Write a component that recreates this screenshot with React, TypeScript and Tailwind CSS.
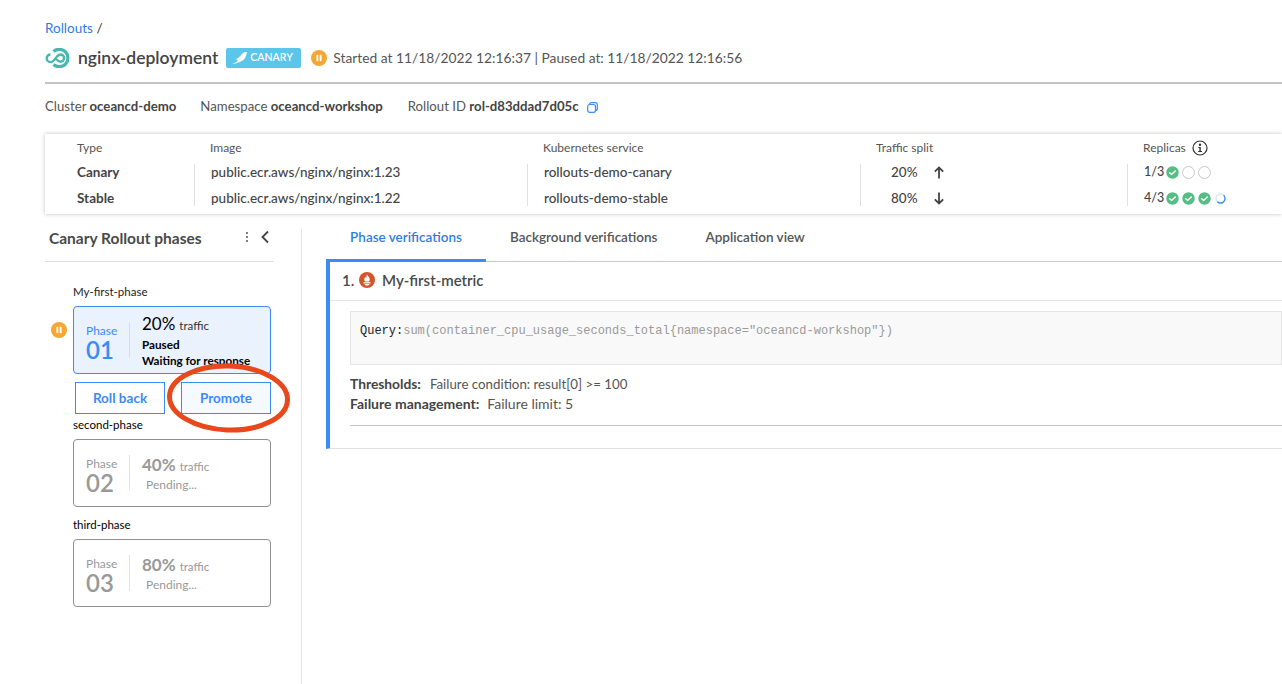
const PauseIcon = ({ size = 16 }: { size?: number }) => (
  <svg width={size} height={size} viewBox="0 0 16 16" className="shrink-0">
    <circle cx="8" cy="8" r="8" fill="#f5a733" />
    <rect x="5.4" y="4.8" width="1.9" height="6.4" rx="0.8" fill="#fff" />
    <rect x="8.7" y="4.8" width="1.9" height="6.4" rx="0.8" fill="#fff" />
  </svg>
)

const Logo = () => (
  <svg width="25" height="20" viewBox="0 0 25 20" className="shrink-0">
    <path d="M8.500 3.500A8.700 8.700 0 1 1 8.500 16.500" fill="none" stroke="#47b8b0" strokeWidth="3.200" />
    <path d="M5.500 6.500a3.800 3.800 0 1 0 0 7.600C8.500 14.100 10.500 10 12 8.500C13.500 7 14.500 6.500 15.500 6.500a3.600 3.600 0 0 1 0 7.200C14 13.700 12.500 12.500 11 11" fill="none" stroke="#47b8b0" strokeWidth="2.400" />
  </svg>
)

const Bird = () => (
  <svg width="18" height="14" viewBox="0 0 18 14">
    <path d="M1 13C4 12 6 11 7 9.500C6 9 5.500 8.500 5 8C8 7 10 4 11.500 2.500C13 1 15 0.500 16.500 1.500C15.800 2 15.500 2.500 15.400 3.500C15 7 11 11 7 11.500C5 12.500 3 13 1 13Z" fill="#fff" />
  </svg>
)

const Check = () => (
  <svg width="13" height="13" viewBox="0 0 13 13" className="shrink-0">
    <circle cx="6.500" cy="6.500" r="6.200" fill="#56bd85" />
    <path d="M3.700 6.800L5.600 8.500L9.300 4.900" fill="none" stroke="#fff" strokeWidth="1.400" strokeLinecap="round" strokeLinejoin="round" />
  </svg>
)

const Empty = () => <span className="w-[13px] h-[13px] rounded-full border border-[#c9c9c9] shrink-0" />

const Spinner = () => (
  <svg width="13" height="13" viewBox="0 0 13 13" className="shrink-0">
    <circle cx="6.500" cy="6.500" r="4.500" fill="none" stroke="#d4e4fb" strokeWidth="1.300" />
    <path d="M9.700 3.300A4.500 4.500 0 1 1 3.300 9.700" fill="none" stroke="#3b8bf5" strokeWidth="1.300" />
  </svg>
)

const Prometheus = () => (
  <svg width="16" height="16" viewBox="0 0 16 16" className="shrink-0">
    <circle cx="8" cy="8" r="8" fill="#d4552c" />
    <path d="M8 2.500C8.500 4 10.500 4.800 10.700 7C10.800 8.200 10.300 9 10 9.500H6C5.700 9 5.200 8.200 5.300 7C5.500 6 6 5.500 6.300 4.800C6.500 5.500 6.800 5.800 7.200 6C7.400 4.800 7.400 3.600 8 2.500Z" fill="#fff" />
    <rect x="4.500" y="10.200" width="7" height="1.200" fill="#fff" />
    <path d="M5.500 12H10.500C10.300 13 9.200 13.600 8 13.600C6.800 13.600 5.700 13 5.500 12Z" fill="#fff" />
  </svg>
)

const phases = [
  { name: 'second-phase', no: '02', pct: '40%' },
  { name: 'third-phase', no: '03', pct: '80%' },
]

function PendingPhase({ name, no, pct, mt }: { name: string; no: string; pct: string; mt: string }) {
  return (
    <div className={mt}>
      <div className="text-[11.500px] leading-[14px] text-black ml-[28px]">{name}</div>
      <div className="ml-[28px] mt-[7px] w-[198px] h-[68px] border border-[#8f8f8f] rounded-[4px] flex items-start pt-[15px] pl-[12px] text-[#999]">
        <div className="w-[44px] h-[36px] border-r border-[#e3e3e3] pt-[2px] flex flex-col">
          <span className="text-[12px] leading-[14px]">Phase</span>
          <span className="text-[24px] leading-[24px] font-semibold">{no}</span>
        </div>
        <div className="pl-[12px]">
          <div className="flex items-baseline gap-[4px] h-[20px]">
            <span className="text-[17px] leading-[20px] font-bold">{pct}</span>
            <span className="text-[11.500px]">traffic</span>
          </div>
          <div className="text-[12px] leading-[16px] mt-[2px] ml-[4px]">Pending...</div>
        </div>
      </div>
    </div>
  )
}

function TableCol({ width, title, pad, rows }: { width: string; title: React.ReactNode; pad: string; rows: React.ReactNode[] }) {
  return (
    <div className={`${width} shrink-0`}>
      <div className={`${pad} h-[18px] text-[12px] leading-[18px] text-[#555] flex items-center`}>{title}</div>
      <div className={`${pad} border-l border-[#e0e0e0] mt-[7px] h-[42px] flex flex-col justify-between text-[13.500px] font-medium text-[#444]`}>
        {rows.map((r, i) => (
          <div key={i} className="h-[16px] leading-[16px] flex items-center">{r}</div>
        ))}
      </div>
    </div>
  )
}

export default function App() {
  return (
    <div className="relative w-[1282px] h-[684px] overflow-hidden bg-white text-[#444]" style={{ fontFamily: 'Lato, sans-serif' }}>
      {/* header */}
      <div className="pl-[45px] pt-[20px]">
        <div className="h-[16px] text-[13.500px] leading-[16px]">
          <span className="text-[#2f7de1]">Rollouts</span> <span className="text-[#333]">/</span>
        </div>
        <div className="mt-[12px] h-[20px] flex items-center">
          <Logo />
          <span className="ml-[8px] text-[17.500px] font-semibold text-[#444]">nginx-deployment</span>
          <div className="ml-[8px] w-[75px] h-[20px] rounded-[2px] bg-[#5bc5ea] flex items-center pl-[5px] gap-[1px]">
            <Bird />
            <span className="text-[10.500px] font-semibold text-white">CANARY</span>
          </div>
          <span className="ml-[10px]"><PauseIcon /></span>
          <span className="ml-[6px] text-[13.800px] text-[#555]">Started at 11/18/2022 12:16:37 | Paused at: 11/18/2022 12:16:56</span>
        </div>
        <div className="mt-[14px] h-[2px] bg-[#c4c4c4]" />
        <div className="mt-[15px] h-[16px] flex items-center text-[13.200px] text-[#555]">
          <span>Cluster <b className="font-bold text-[#444]">oceancd-demo</b></span>
          <span className="ml-[24px]">Namespace <b className="font-bold text-[#444]">oceancd-workshop</b></span>
          <span className="ml-[25px]">Rollout ID <b className="font-bold text-[#444]">rol-d83ddad7d05c</b></span>
          <svg width="11" height="11" viewBox="0 0 11 11" className="ml-[8px]">
            <rect x="2.500" y="0.700" width="7.800" height="7.800" rx="2" fill="none" stroke="#3b8bf5" strokeWidth="1.200" />
            <rect x="0.700" y="2.500" width="7.800" height="7.800" rx="2" fill="#fff" stroke="#3b8bf5" strokeWidth="1.200" />
          </svg>
        </div>

        {/* images table */}
        <div className="mt-[19px] h-[80px] pl-[32px] pt-[5px] flex shadow-[0_0_4px_rgba(0,0,0,0.25)]">
          <div className="w-[117px] shrink-0">
            <div className="h-[18px] text-[12px] leading-[18px] text-[#555]">Type</div>
            <div className="mt-[7px] h-[42px] flex flex-col justify-between text-[13.500px] font-bold text-[#444]">
              <div className="h-[16px] leading-[16px]">Canary</div>
              <div className="h-[16px] leading-[16px]">Stable</div>
            </div>
          </div>
          <TableCol width="w-[333px]" pad="pl-[16px]" title="Image" rows={['public.ecr.aws/nginx/nginx:1.23', 'public.ecr.aws/nginx/nginx:1.22']} />
          <TableCol width="w-[333px]" pad="pl-[16px]" title="Kubernetes service" rows={['rollouts-demo-canary', 'rollouts-demo-stable']} />
          <TableCol
            width="w-[267px]"
            pad="pl-[16px]"
            title="Traffic split"
            rows={[
              <span key="a" className="flex items-center ml-[14px] gap-[15px]">20%
                <svg width="12" height="13" viewBox="0 0 12 13"><path d="M6 12.500V1.500M1.800 5.700L6 1.500L10.200 5.700" fill="none" stroke="#444" strokeWidth="1.800" /></svg>
              </span>,
              <span key="b" className="flex items-center ml-[14px] gap-[15px]">80%
                <svg width="12" height="13" viewBox="0 0 12 13"><path d="M6 0.500V11.500M1.800 7.300L6 11.500L10.200 7.300" fill="none" stroke="#444" strokeWidth="1.800" /></svg>
              </span>,
            ]}
          />
          <TableCol
            width="w-[155px]"
            pad="pl-[16px]"
            title={
              <span className="flex items-center gap-[6px]">Replicas
                <svg width="16" height="16" viewBox="0 0 16 16">
                  <circle cx="8" cy="8" r="7" fill="none" stroke="#333" strokeWidth="1.200" />
                  <circle cx="8" cy="4.700" r="1.200" fill="#333" />
                  <path d="M6.300 7H8.800V11H10V12H6.200V11H7.400V8H6.300Z" fill="#333" />
                </svg>
              </span>
            }
            rows={[
              <span key="a" className="flex items-center gap-[3px]"><span className="w-[19px] text-[12.500px]">1/3</span><Check /><Empty /><Empty /></span>,
              <span key="b" className="flex items-center gap-[3px]"><span className="w-[19px] text-[12.500px]">4/3</span><Check /><Check /><Check /><Spinner /></span>,
            ]}
          />
        </div>
      </div>

      {/* main */}
      <div className="flex mt-[15px]">
        {/* phases sidebar */}
        <div className="w-[257px] h-[455px] shrink-0 border-r border-[#e5e5e5] ml-[45px]">
          <div className="w-[229px] h-[33px] border-b border-[#dfdfdf] flex items-start pl-[4px] pr-[4px]">
            <span className="text-[15.500px] leading-[18px] font-bold text-[#4a4a4a]">Canary Rollout phases</span>
            <svg width="4" height="12" viewBox="0 0 4 12" className="ml-auto mt-[2px]">
              <circle cx="2" cy="2" r="1" fill="#555" /><circle cx="2" cy="6" r="1" fill="#555" /><circle cx="2" cy="10" r="1" fill="#555" />
            </svg>
            <svg width="10" height="14" viewBox="0 0 10 14" className="ml-[11px] mt-[1px]">
              <path d="M8 1.500L2.500 7L8 12.500" fill="none" stroke="#444" strokeWidth="1.800" />
            </svg>
          </div>
          <div className="mt-[23px] text-[11.500px] leading-[14px] text-[#222] ml-[28px]">My-first-phase</div>
          <div className="mt-[7px] flex items-center ml-[6px]">
            <div className="mb-[20px]"><PauseIcon /></div>
            <div className="ml-[6px] w-[198px] h-[68px] border border-[#3b8bf5] rounded-[4px] bg-[#e9f2fd] flex items-start pt-[7px] pl-[12px]">
              <div className="mt-[8px] w-[44px] h-[36px] border-r border-[#d5dfeb] pt-[2px] flex flex-col text-[#3b8bf5]">
                <span className="text-[12px] leading-[14px]">Phase</span>
                <span className="text-[24px] leading-[24px] font-semibold">01</span>
              </div>
              <div className="pl-[12px] text-black">
                <div className="flex items-baseline gap-[4px] h-[20px]">
                  <span className="text-[17px] leading-[20px]">20%</span>
                  <span className="text-[11.500px] text-[#333]">traffic</span>
                </div>
                <div className="text-[11.700px] leading-[16px] font-bold mt-[2px] whitespace-nowrap">Paused</div>
                <div className="text-[11.700px] leading-[16px] font-bold whitespace-nowrap">Waiting for response</div>
              </div>
            </div>
          </div>
          <div className="ml-[30px] mt-[8px] flex gap-[16px]">
            <button className="w-[90px] h-[32px] border border-[#3b8bf5] text-[#3b8bf5] text-[13.500px] font-bold bg-white">Roll back</button>
            <button className="w-[90px] h-[32px] border border-[#3b8bf5] text-[#3b8bf5] text-[13.500px] font-bold bg-[#f6faff]">Promote</button>
          </div>
          <PendingPhase {...phases[0]} mt="mt-[4px]" />
          <PendingPhase {...phases[1]} mt="mt-[11px]" />
        </div>

        {/* details */}
        <div className="flex-1 ml-[24px] min-w-0">
          <div className="flex h-[33px] border-b border-[#c9c9c9]">
            <div className="w-[160px] h-[33px] border-b-[3px] border-[#3b8bf5] text-center text-[13.500px] font-semibold leading-[17px] text-[#2f7de1]">Phase verifications</div>
            <div className="ml-[24px] text-[13.500px] font-semibold leading-[17px] text-[#555]">Background verifications</div>
            <div className="ml-[48px] text-[13.500px] font-semibold leading-[17px] text-[#555]">Application view</div>
          </div>
          <div className="h-[187px] border-l-[4px] border-[#3b8bf5] border-b border-b-[#e0e0e0]">
            <div className="h-[39px] border-b border-[#e5e5e5] flex items-center pb-[2px] pl-[12px] text-[15px] font-semibold text-[#4a4a4a]">
              <span className="w-[17px]">1.</span>
              <Prometheus />
              <span className="ml-[7px]">My-first-metric</span>
            </div>
            <div className="ml-[20px] mt-[10px] h-[54px] bg-[#f9f9f9] border border-[#e5e5e5] pl-[9px] pt-[11px] text-[12px] leading-[16px] whitespace-nowrap" style={{ fontFamily: '"Liberation Mono", monospace' }}>
              <span className="text-[#222]">Query:</span>
              <span className="text-[#999]">sum(container_cpu_usage_seconds_total{'{'}namespace="oceancd-workshop"{'}'})</span>
            </div>
            <div className="ml-[20px] mt-[9px] leading-[20px] text-[#555]">
              <div className="flex"><b className="font-bold text-[#444] text-[13.800px]">Thresholds:</b><span className="ml-[9px] text-[13.300px]">Failure condition: result[0] &gt;= 100</span></div>
              <div className="flex"><b className="font-bold text-[#444] text-[14px]">Failure management:</b><span className="ml-[8px] text-[14px]">Failure limit: 5</span></div>
            </div>
            <div className="ml-[20px] mt-[11px] h-[1px] bg-[#c4c4c4]" />
          </div>
        </div>
      </div>

      {/* annotation drawn over the page */}
      <svg className="absolute left-[160px] top-[358px]" width="140" height="80" viewBox="0 0 140 80">
        <ellipse cx="68.500" cy="40" rx="59" ry="32" fill="none" stroke="#e8481c" strokeWidth="5" transform="rotate(2 68 40)" />
      </svg>
    </div>
  )
}
